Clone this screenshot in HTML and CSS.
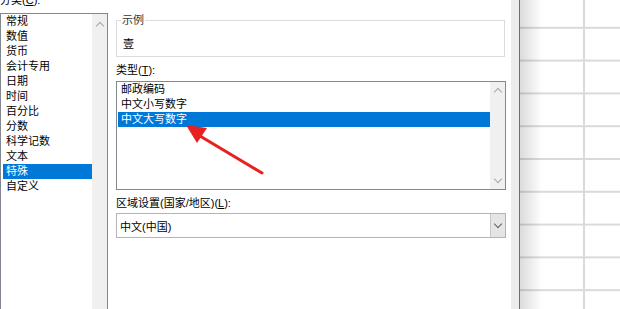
FILE: index.html
```html
<!DOCTYPE html>
<html lang="zh-CN">
<head>
  <title>设置单元格格式 - 特殊</title>
  <link rel="stylesheet" href="styles.css">
</head>
<body>
  <div class="screen">
    <div class="dialog">
      <div class="category">
        <div class="label cut">分类(<u>C</u>):</div>
        <div class="listbox cat-list">
          <ul class="items">
            <li>常规</li>
            <li>数值</li>
            <li>货币</li>
            <li>会计专用</li>
            <li>日期</li>
            <li>时间</li>
            <li>百分比</li>
            <li>分数</li>
            <li>科学记数</li>
            <li>文本</li>
            <li class="selected">特殊</li>
            <li>自定义</li>
          </ul>
          <div class="scrollbar">
            <span class="chev up"></span>
            <span class="chev down"></span>
          </div>
        </div>
      </div>

      <div class="options">
        <fieldset class="sample">
          <legend>示例</legend>
          <div class="sample-value">壹</div>
        </fieldset>

        <div class="label type-label">类型(<u>T</u>):</div>
        <div class="listbox type-list">
          <ul class="items">
            <li>邮政编码</li>
            <li>中文小写数字</li>
            <li class="selected">中文大写数字</li>
          </ul>
          <div class="scrollbar">
            <span class="chev up"></span>
            <span class="chev down"></span>
          </div>
        </div>

        <div class="label locale-label">区域设置(国家/地区)(<u>L</u>):</div>
        <div class="combo">
          <span class="combo-value">中文(中国)</span>
          <span class="combo-btn"><span class="chev down dark"></span></span>
        </div>
      </div>

      <svg class="pointer" width="100" height="70" viewBox="0 0 100 70">
        <line x1="86" y1="58" x2="24" y2="21" stroke="#e8201f" stroke-width="3" stroke-linecap="round"/>
        <polygon points="10,10 31,13 21,28" fill="#e8201f"/>
      </svg>
    </div>

    <div class="edge"></div>
    <div class="sheet"></div>
  </div>
</body>
</html>
```

FILE: styles.css
```css
* {
  box-sizing: border-box;
}

body {
  margin: 0;
  font-family: "Liberation Sans", "Noto Sans CJK SC", sans-serif;
  font-size: 11px;
  color: #000;
  overflow: hidden;
}

.screen {
  display: flex;
  width: 620px;
  height: 309px;
  overflow: hidden;
}

.dialog {
  position: relative;
  width: 511px;
  background: #fff;
  display: flex;
  gap: 8px;
}

.label {
  height: 13px;
  line-height: 13px;
  white-space: nowrap;
}

.label u {
  text-decoration: underline;
}

.category {
  width: 108px;
  flex: none;
}

.cut {
  margin-top: -6px;
  margin-bottom: 6px;
}

.listbox {
  display: flex;
  border: 1px solid #828790;
  background: #fff;
}

.items {
  list-style: none;
  margin: 0;
  padding: 0;
  flex: 1;
}

.items li {
  height: 15px;
  line-height: 15px;
  padding-left: 3px;
  white-space: nowrap;
}

.items li.selected {
  background: #0078d7;
  color: #fff;
}

.cat-list {
  height: 310px;
  padding: 0 0 0 1px;
}

.cat-list .items {
  padding-left: 1px;
}

.scrollbar {
  width: 15px;
  background: #f0f0f0;
  display: flex;
  flex-direction: column;
  justify-content: space-between;
  align-items: center;
  padding: 5px 0;
}

.cat-list .scrollbar {
  padding: 7px 0 0;
}

.chev {
  width: 6px;
  height: 6px;
  border-left: 1px solid #a6a6a6;
  border-top: 1px solid #a6a6a6;
}

.chev.up {
  transform: translateY(2px) rotate(45deg);
}

.chev.down {
  transform: translateY(-2px) rotate(225deg);
}

.chev.dark {
  border-color: #606060;
}

.options {
  width: 390px;
  flex: none;
  padding-top: 14px;
}

.sample {
  margin: 0;
  padding: 0 0 0 6px;
  height: 43px;
  width: 389px;
  border: 1px solid #dcdcdc;
}

.sample legend {
  padding: 0 1px;
  margin-left: -2px;
  line-height: 12px;
  color: #333;
}

.sample-value {
  margin-top: 12px;
  line-height: 12px;
}

.type-label {
  margin-top: 7px;
  margin-bottom: 4px;
}

.type-list {
  height: 109px;
  padding-left: 1px;
}

.locale-label {
  margin-top: 7px;
  margin-bottom: 3px;
}

.combo {
  display: flex;
  align-items: center;
  height: 25px;
  width: 390px;
  border: 1px solid #b4b4b4;
}

.combo-value {
  flex: 1;
  padding-left: 3px;
}

.combo-btn {
  width: 15px;
  height: 23px;
  background: #e5e5e5;
  border-left: 1px solid #c8c8c8;
  display: flex;
  align-items: center;
  justify-content: center;
}

.pointer {
  position: absolute;
  left: 176px;
  top: 115px;
}

.edge {
  width: 9px;
  flex: none;
  background: #ececec;
  border-right: 1px solid #6e6e6e;
}

.sheet {
  flex: 1;
  background-color: #fff;
  background-image:
    linear-gradient(to right, rgba(0, 0, 0, 0.14), rgba(0, 0, 0, 0) 22px),
    linear-gradient(to right, transparent 63px, #dadada 63px, #dadada 65px, transparent 65px),
    linear-gradient(to bottom, transparent 31px, #dadada 31px, #dadada 33px);
  background-size: 100% 100%, 100% 100%, 100% 32.8px;
  background-position: 0 0, 0 0, 0 -4px;
}
```
